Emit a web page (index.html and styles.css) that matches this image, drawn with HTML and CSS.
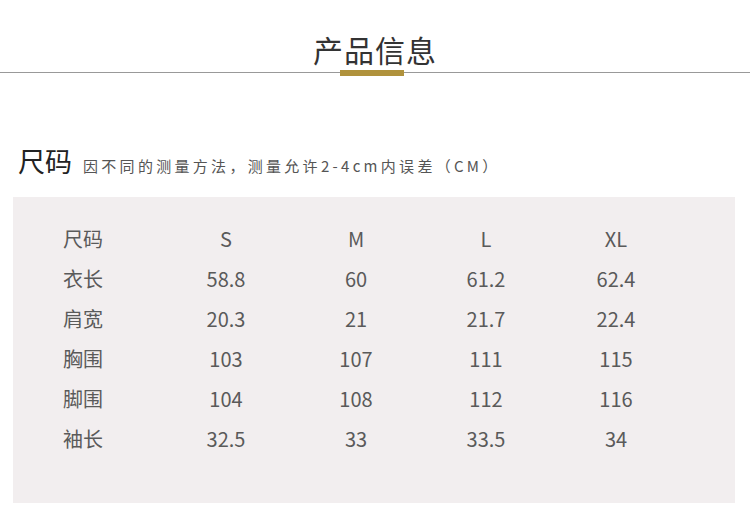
FILE: index.html
```html
<!DOCTYPE html>
<html lang="zh-CN">
<head>
<meta charset="utf-8">
<title>产品信息</title>
<link rel="stylesheet" href="styles.css">
</head>
<body>
<header class="head">
  <h1 class="head-title">产品信息</h1>
</header>
<section class="size">
  <div class="size-heading">
    <h2 class="size-title">尺码</h2>
    <p class="size-note">因不同的测量方法，测量允许2-4cm内误差（CM）</p>
  </div>
  <div class="size-box">
    <div class="size-table">
      <div class="cell label">尺码</div><div class="cell">S</div><div class="cell">M</div><div class="cell">L</div><div class="cell">XL</div>
      <div class="cell label">衣长</div><div class="cell">58.8</div><div class="cell">60</div><div class="cell">61.2</div><div class="cell">62.4</div>
      <div class="cell label">肩宽</div><div class="cell">20.3</div><div class="cell">21</div><div class="cell">21.7</div><div class="cell">22.4</div>
      <div class="cell label">胸围</div><div class="cell">103</div><div class="cell">107</div><div class="cell">111</div><div class="cell">115</div>
      <div class="cell label">脚围</div><div class="cell">104</div><div class="cell">108</div><div class="cell">112</div><div class="cell">116</div>
      <div class="cell label">袖长</div><div class="cell">32.5</div><div class="cell">33</div><div class="cell">33.5</div><div class="cell">34</div>
    </div>
  </div>
</section>
</body>
</html>
```
FILE: styles.css
```css
* { box-sizing: border-box; }
html, body { margin: 0; padding: 0; background: #fff; }
body {
  width: 750px;
  font-family: "Noto Sans CJK SC", "Noto Sans", sans-serif;
  color: #333;
}
.head {
  position: relative;
  height: 73px;
  border-bottom: 1px solid #999;
  display: flex;
  justify-content: center;
  align-items: flex-start;
}
.head::after {
  content: "";
  position: absolute;
  left: 340px;
  top: 70px;
  width: 64px;
  height: 6px;
  background: #b0923c;
}
.head-title {
  margin: 27px 0 0;
  font-size: 30px;
  line-height: 44px;
  font-weight: 400;
  color: #333;
  letter-spacing: 1px;
}
.size { padding-top: 68px; }
.size-heading {
  display: flex;
  align-items: baseline;
  padding-left: 18px;
  height: 56px;
}
.size-title {
  margin: 0;
  font-size: 27px;
  line-height: 40px;
  font-weight: 400;
  color: #222;
}
.size-note {
  margin: 0 0 0 11px;
  font-size: 15px;
  letter-spacing: 3.3px;
  color: #555;
}
.size-box {
  margin: 0 15px 0 13px;
  height: 306px;
  background: #f2eeef;
  padding: 21px 0 0 50px;
}
.size-table {
  display: grid;
  grid-template-columns: 98px repeat(4, 130px);
  grid-auto-rows: 40px;
}
.cell {
  display: flex;
  align-items: center;
  justify-content: center;
  font-size: 20px;
  color: #5a5a5a;
}
.cell.label { justify-content: flex-start; }
```
